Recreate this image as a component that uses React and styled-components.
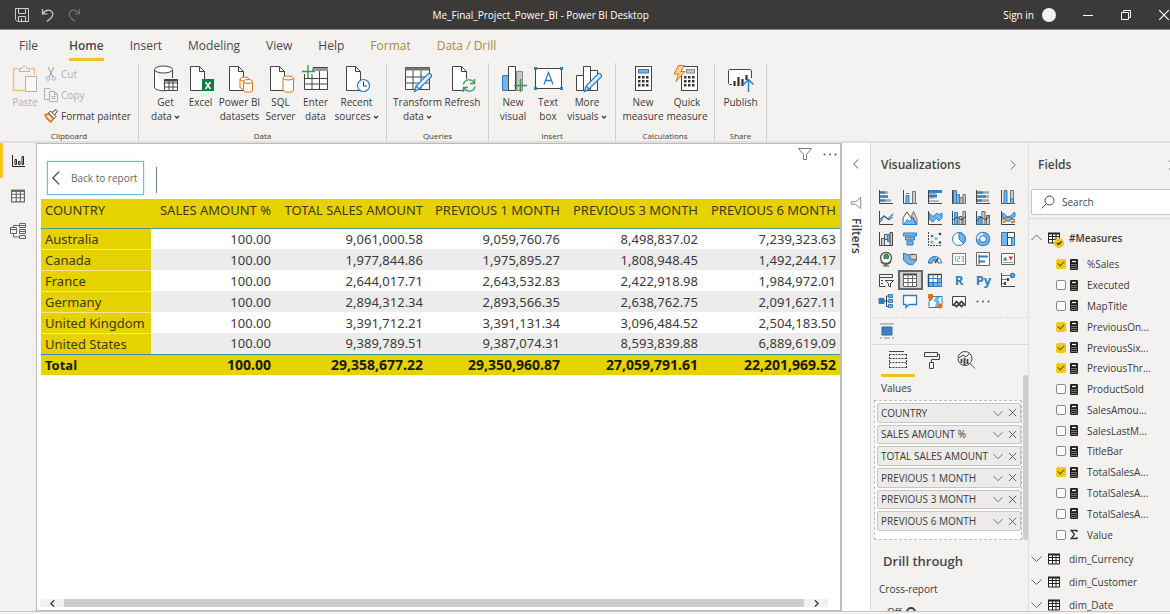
import React, { useState } from 'react';
import styled, { createGlobalStyle, css } from 'styled-components';

const GlobalStyle = createGlobalStyle`
  * {
    box-sizing: border-box;
  }

  body {
    margin: 0;
    overflow: hidden;
    background: #f3f2f1;
    color: #3b3a39;
    font-family: 'Open Sans', 'Noto Sans', sans-serif;
    font-size: 10px;
    line-height: 14px;
  }

  button,
  input {
    font: inherit;
    color: inherit;
  }

  button {
    padding: 0;
    border: 0;
    background: none;
    cursor: pointer;
  }
`;

const Shell = styled.div`
  height: 100vh;
  display: flex;
  flex-direction: column;
  overflow: hidden;
`;

const Glyph = styled.svg`
  display: block;
  flex: none;
  width: ${props => props.$w}px;
  height: ${props => props.$h || props.$w}px;
  fill: none;
  stroke: ${props => props.$color || '#444'};
  stroke-width: ${props => props.$line || 1};
`;

/* ---------- title bar ---------- */

const TitleBar = styled.header`
  flex: none;
  display: grid;
  grid-template-columns: 434fr auto 523fr;
  align-items: center;
  height: 30px;
  background: #3b3a39;
  border-bottom: 1px solid #8a8886;
  color: #fff;
  overflow: hidden;
`;

const QuickAccess = styled.div`
  display: flex;
  align-items: center;
  gap: 12px;
  padding-left: 15px;
`;

const WindowTitle = styled.h1`
  margin: 0;
  font-size: 10px;
  font-weight: 400;
  white-space: nowrap;
`;

const WindowActions = styled.div`
  display: flex;
  align-items: center;
  justify-content: flex-end;
`;

const SignIn = styled.button`
  display: flex;
  align-items: center;
  gap: 8px;
  margin-right: 26px;
`;

const Avatar = styled.span`
  width: 14px;
  height: 14px;
  border-radius: 50%;
  background: #f3f2f1;
`;

const WindowButton = styled.button`
  display: flex;
  margin-left: ${props => (props.$first ? 0 : 26)}px;
`;

/* ---------- ribbon ---------- */

const Ribbon = styled.div`
  flex: none;
  border-bottom: 2px solid #e1dfdd;
`;

const TabRow = styled.nav`
  display: flex;
  align-items: flex-start;
  gap: 26px;
  height: 33px;
  padding: 6px 0 0 19px;
`;

const RibbonTab = styled.button`
  height: 25px;
  padding: 1px 0 3px;
  border-bottom: 3px solid ${props => (props.$active ? '#e8c51e' : 'transparent')};
  margin-right: ${props => (props.$file ? 5 : 0)}px;
  color: ${props => (props.$context ? '#a98b2d' : '#4a4846')};
  font-size: 12px;
  line-height: 18px;
  font-weight: ${props => (props.$active ? 600 : 400)};
`;

const Groups = styled.div`
  display: flex;
  height: 78px;
`;

const Group = styled.section`
  display: flex;
  flex-direction: column;
  justify-content: space-between;
  align-items: center;
  width: ${props => props.$width}px;
  border-right: 1px solid #d0cecc;
  padding-top: 2px;
`;

const GroupTools = styled.div`
  display: flex;
  align-items: flex-start;
`;

const GroupLabel = styled.div`
  font-size: 8px;
  line-height: 10px;
`;

const RibbonButton = styled.button`
  display: flex;
  flex-direction: column;
  align-items: center;
  width: ${props => props.$width}px;
  color: ${props => (props.$disabled ? '#b3b0ad' : '#3b3a39')};
  white-space: nowrap;
  gap: 2px;
`;

const ButtonText = styled.span`
  display: block;
  line-height: 14px;
`;

const ClipList = styled.div`
  display: flex;
  flex-direction: column;
  width: 88px;
  gap: 7px;
  padding-top: 2px;
`;

const ClipButton = styled.button`
  display: flex;
  align-items: center;
  gap: 3px;
  height: 14px;
  white-space: nowrap;
  color: ${props => (props.$disabled ? '#b3b0ad' : '#3b3a39')};
`;

/* ---------- workspace ---------- */

const Workspace = styled.div`
  flex: 1;
  min-height: 0;
  display: flex;
`;

const StatusEdge = styled.footer`
  flex: none;
  height: 3px;
  border-top: 1px solid #c8c6c4;
`;

const ViewRail = styled.nav`
  flex: none;
  display: flex;
  flex-direction: column;
  width: 36px;
`;

const RailButton = styled.button`
  display: flex;
  align-items: center;
  justify-content: center;
  height: 35px;
  padding-right: 3px;
  border-left: 3px solid ${props => (props.$active ? '#f2c811' : 'transparent')};
`;

const Canvas = styled.main`
  flex: 1;
  min-width: 0;
  display: flex;
  flex-direction: column;
  background: #fff;
  border: 1px solid #bebbb8;
  border-right-width: 2px;
`;

const CanvasHeader = styled.div`
  display: flex;
  height: 55px;
  padding: 3px 3px 0 10px;
`;

const BackButton = styled.button`
  display: flex;
  align-items: center;
  gap: 8px;
  width: 97px;
  height: 34px;
  margin-top: 14px;
  padding-left: 1px;
  border: 1px solid #5fc3e4;
  box-shadow: 0 0 2px #9fdcf0;
  color: #666;
  white-space: nowrap;
`;

const HeaderRule = styled.div`
  width: 1px;
  height: 26px;
  margin: 20px auto 0 12px;
  background: #777;
`;

const HeaderActions = styled.div`
  display: flex;
  align-items: center;
  gap: 11px;
  height: 14px;
`;

const TableWrap = styled.div`
  flex: 1;
  padding: 0 3px 0 4px;
`;

const DataTable = styled.table`
  width: 100%;
  table-layout: fixed;
  border-collapse: collapse;
  color: #3b3a39;
  font-family: 'Noto Sans', 'Open Sans', sans-serif;
  font-size: 13px;
  line-height: 20px;
`;

const Column = styled.col`
  width: ${props => props.$width}px;
`;

const HeadCell = styled.th`
  height: 29px;
  padding: 1px 4px 0;
  vertical-align: top;
  border-bottom: 1px solid #4a9a8c;
  background: #e6d200;
  font-weight: 400;
  text-align: ${props => (props.$left ? 'left' : 'right')};
  white-space: nowrap;
  color: #3d3a14;
`;

const BodyRow = styled.tr`
  height: 21px;
  background: ${props => (props.$shade ? '#ececec' : '#fff')};
`;

const RowHead = styled.th`
  padding: 0 4px;
  background: #e6d200;
  border-bottom: ${props => (props.$last ? '0' : '1px solid #f1e88a')};
  color: #3d3a14;
  font-weight: 400;
  text-align: left;
  white-space: nowrap;
`;

const Cell = styled.td`
  padding: 0 4px;
  text-align: right;
`;

const TotalCell = styled.td`
  height: 20px;
  padding: 0 4px;
  border-top: 1px solid #3d8fa8;
  background: #e6d200;
  color: #1c1a08;
  font-size: 14px;
  font-weight: 700;
  text-align: right;

  &:first-child {
    font-size: 13px;
    text-align: left;
  }
`;

const ScrollTrack = styled.div`
  display: flex;
  align-items: center;
  height: 8px;
  margin: 0 12px 3px 3px;
  background: #f1f1f1;
`;

const ScrollArrow = styled.button`
  display: flex;
  justify-content: center;
  width: 24px;
`;

const ScrollThumb = styled.div`
  flex: 1;
  height: 8px;
  background: #cdcdcd;
`;

const FiltersPane = styled.aside`
  flex: none;
  display: flex;
  flex-direction: column;
  align-items: center;
  width: 28px;
  padding-top: 16px;
  background: #fff;
`;

const FiltersTitle = styled.h2`
  margin: 9px 0 0;
  writing-mode: vertical-rl;
  font-size: 12px;
  line-height: 16px;
  font-weight: 600;
`;

const FilterMark = styled.span`
  margin-top: 28px;
  transform: rotate(90deg);
`;

/* ---------- side panes ---------- */

const Pane = styled.aside`
  flex: none;
  width: ${props => props.$width}px;
  overflow: hidden;
  border-left: 1px solid #e1dfdd;
`;

const PaneHeader = styled.div`
  display: flex;
  align-items: center;
  justify-content: space-between;
  width: ${props => props.$width}px;
  height: 44px;
  padding: 0 0 0 ${props => props.$inset || 10}px;
`;

const PaneTitle = styled.h2`
  margin: 0;
  font-size: 12px;
  line-height: 18px;
  font-weight: 600;
  color: #484644;
`;

const VisualGrid = styled.div`
  display: grid;
  grid-template-columns: repeat(6, 1fr);
  grid-auto-rows: 1fr;
  height: 124px;
  margin: 0 8px 6px 3px;
`;

const VisualButton = styled.button`
  display: flex;
  align-items: center;
  justify-content: center;
  ${props =>
    props.$selected &&
    css`
      background: #d2d0ce;
      outline: 2px solid #666;
      outline-offset: -2px;
    `}
`;

const ScriptMark = styled.span`
  color: #2b7fc3;
  font-size: 13px;
  line-height: 16px;
  font-weight: 700;
`;

const CustomVisuals = styled.div`
  display: flex;
  align-items: center;
  height: 28px;
  padding-left: 8px;
  border-top: 1px dashed #dcdad8;
  border-bottom: 1px solid #dcdad8;
`;

const PaneBody = styled.div`
  display: flex;
`;

const PaneContent = styled.div`
  flex: 1;
  min-width: 0;
`;

const PaneScroll = styled.div`
  width: 5px;
  height: 165px;
  margin-top: 30px;
  border-radius: 2px;
  background: #d0cecc;
`;

const FormatTabs = styled.div`
  display: flex;
  height: 32px;
  padding-left: 10px;
`;

const FormatTab = styled.button`
  display: flex;
  align-items: center;
  justify-content: center;
  width: 34px;
  border-bottom: 3px solid ${props => (props.$active ? '#e8c51e' : 'transparent')};
`;

const WellLabel = styled.h3`
  margin: 0;
  padding: 4px 0 5px 10px;
  font-size: 10px;
  font-weight: 400;
  line-height: 14px;
`;

const Well = styled.ul`
  list-style: none;
  display: grid;
  grid-auto-rows: 1fr;
  gap: 2px;
  height: 140px;
  margin: 0 1px 0 3px;
  padding: 2px 2px 8px;
  background: #fff;
  border: 1px dashed #bebbb8;
`;

const WellItem = styled.li`
  display: flex;
  align-items: center;
  gap: 5px;
  padding: 0 3px;
  border: 1px solid #c8c6c4;
  border-radius: 2px;
  background: #edebe9;
  white-space: nowrap;
`;

const WellName = styled.span`
  flex: 1;
  min-width: 0;
`;

const DrillTitle = styled.h2`
  margin: 0;
  padding: 11px 0 0 12px;
  font-size: 13px;
  line-height: 20px;
  font-weight: 600;
  color: #484644;
`;

const DrillLabel = styled.label`
  display: block;
  padding: 11px 0 0 8px;
`;

const DrillToggle = styled.div`
  display: flex;
  gap: 4px;
  padding: 9px 0 0 16px;
`;

const Toggle = styled.input`
  appearance: none;
  width: 10px;
  height: 10px;
  margin: 2px 0 0;
  border: 2px solid #484644;
  border-radius: 50%;
`;

const SearchRow = styled.div`
  margin-top: 2px;
  padding: 0 0 3px 2px;
  border-bottom: 1px solid #dcdad8;
`;

const SearchField = styled.label`
  display: flex;
  align-items: center;
  gap: 5px;
  width: 148px;
  height: 26px;
  padding-left: 9px;
  border: 1px solid #c8c6c4;
  border-radius: 2px;
  background: #fff;
`;

const SearchInput = styled.input`
  flex: 1;
  min-width: 0;
  border: 0;
  outline: 0;
  background: none;

  &::placeholder {
    color: #484644;
  }
`;

const TreeRow = styled.button`
  display: flex;
  align-items: center;
  gap: 6px;
  width: 100%;
  height: 23px;
  padding-left: 2px;
  font-weight: ${props => (props.$strong ? 600 : 400)};
  white-space: nowrap;
`;

const TreeName = styled.span`
  padding-left: 3px;
`;

const TableMark = styled.span`
  position: relative;
`;

const CheckBadge = styled.span`
  position: absolute;
  left: 6px;
  top: 6px;
`;

const FieldTree = styled.div`
  padding-top: 7px;
`;

const FieldList = styled.ul`
  list-style: none;
  display: grid;
  grid-auto-rows: 1fr;
  height: 291px;
  margin: 5px 0 2px;
  padding: 0 0 0 27px;
`;

const FieldRow = styled.label`
  display: flex;
  align-items: center;
  gap: 4px;
  height: 100%;
  white-space: nowrap;
`;

const FieldName = styled.span`
  padding-left: 5px;
`;

const Check = styled.input`
  appearance: none;
  display: flex;
  justify-content: center;
  width: 10px;
  height: 10px;
  margin: 0;
  border: 1px solid #8a8886;
  border-radius: 2px;
  background: #fff;

  &:checked {
    border-color: #f0c818;
    background: #f0c818;
  }

  &:checked::after {
    content: '';
    width: 3px;
    height: 5px;
    border: solid #6b5600;
    border-width: 0 1px 1px 0;
    transform: rotate(45deg);
  }
`;

/* ---------- icons ---------- */

const BLUE = '#2b7fc3';
const SKY = '#74b4e8';
const GREY = '#a6a4a2';
const ORANGE = '#d9731a';

const Chevron = ({ dir = 'down', w = 10, color = '#666', line }) => {
  const paths = {
    down: 'M0 3l5 5 5-5',
    up: 'M0 7.500l5-5 5 5',
    left: 'M7.500 0l-5 5 5 5',
    right: 'M2.500 0l5 5-5 5',
  };
  return (
    <Glyph $w={w} viewBox="-.5 -.5 11 11" $color={color} $line={line}>
      <path d={paths[dir]} />
    </Glyph>
  );
};

const Cross = ({ w = 9, color = '#555' }) => (
  <Glyph $w={w} viewBox="0 0 10 10" $color={color}>
    <path d="M1 1l8 8M9 1l-8 8" />
  </Glyph>
);

const Caret = () => (
  <svg width="8" height="5" viewBox="0 0 8 5" fill="none" stroke="#3b3a39" strokeWidth="1.300">
    <path d="M3 1l2 2 2-2" />
  </svg>
);

const Page = () => <path d="M4.500 1.500h9l5 5v19h-14zM13.500 1.500v5h5" fill="#fff" />;

const Barrel = ({ x, y, w, h }) => (
  <g fill="#fff">
    <path d={`M${x} ${y + 2}v${h - 4}c0 3 ${w} 3 ${w} 0v-${h - 4}`} />
    <ellipse cx={x + w / 2} cy={y + 2} rx={w / 2} ry="2" />
  </g>
);

const Pencil = () => (
  <path
    d="M11.500 26.500l1.500-5.500 12-12c2-1.500 4.500 1 3 3l-12 12zM13 21l3.500 3.500"
    fill="#dcecf9"
    stroke={BLUE}
    strokeWidth="1.200"
  />
);

const Calculator = ({ x = 0 }) => (
  <g>
    <rect x={6.5 + x} y="1.500" width="16" height="24" fill="#fff" />
    {[0, 1, 2].map(r =>
      [0, 1, 2].map(c => (
        <rect key={`${r}${c}`} x={9 + x + c * 4} y={11 + r * 4} width="2.500" height="2.500" fill="#333" stroke="none" />
      ))
    )}
  </g>
);

const ribbonArt = {
  paste: (
    <g>
      <path d="M7 3.500H2.500v22H14M20 3.500h3.500V10" stroke="#f0c08a" strokeWidth="1.500" />
      <path d="M8.500 6.500v-3h2.500c0-3 5-3 5 0h2.500v3z" stroke="#b3b0ad" />
      <path d="M14.500 11.500h11v15h-11z" fill="#f8f8f8" stroke="#b3b0ad" />
    </g>
  ),
  getData: (
    <g>
      <path d="M3.500 5v17c0 4 10 4 12 3.500M21.500 5v8" fill="#fff" />
      <ellipse cx="12.500" cy="4.500" rx="9" ry="3.500" fill="#fff" />
      <path d="M13.500 14.500h13v11h-13zM13.500 18h13M13.500 22h13M18 15v11M22 15v11" fill="#fff" />
      <path d="M13.500 15.500h13" strokeWidth="2" />
    </g>
  ),
  excel: (
    <g>
      <Page />
      <rect x="16" y="14" width="12" height="12" fill="#107c41" stroke="none" />
      <path d="M19.500 17l5 7M24.500 17l-5 7" stroke="#fff" strokeWidth="1.600" />
    </g>
  ),
  datasets: (
    <g>
      <Page />
      <g stroke={ORANGE}>
        <Barrel x={15} y={12} w={9} h={12} />
        <Barrel x={18.5} y={14.500} w={9} h={12.500} />
      </g>
    </g>
  ),
  sql: (
    <g>
      <Page />
      <g stroke={ORANGE}>
        <Barrel x={17} y={11} w={10.5} h={16} />
      </g>
    </g>
  ),
  enterData: (
    <g>
      <path d="M3.500 9v15.500h23v-22H12M3.500 13.500h23M3.500 19h23M11 9v15.500M18.500 6v18.500" fill="#fff" />
      <path d="M11 4.500h16" strokeWidth="3" stroke="#999" />
      <path d="M7 0v13M1 6.500h13" stroke="#2f9e52" strokeWidth="1.400" />
    </g>
  ),
  recent: (
    <g>
      <Page />
      <circle cx="21.500" cy="20.500" r="6" fill="#fff" stroke={BLUE} strokeWidth="1.200" />
      <path d="M21.500 16.500v4.500h3.500" stroke="#333" />
    </g>
  ),
  transform: (
    <g>
      <path d="M2.500 2.500h24v22h-24zM2.500 12h24M2.500 18h24M10 5v20M18 5v20" fill="#fff" />
      <path d="M2.500 4h24" strokeWidth="3" stroke="#777" />
      <Pencil />
    </g>
  ),
  refresh: (
    <g>
      <Page />
      <circle cx="21" cy="20.500" r="7" fill="#f3f2f1" stroke="none" />
      <path
        d="M15.500 19.500c1-6 9-6 11-1M26.500 14v4.500h-4.500M27 21.500c-1 6-9 6-11 1M15.500 27v-4.500h4.500"
        stroke="#3b9a5a"
        strokeWidth="1.400"
      />
    </g>
  ),
  newVisual: (
    <g>
      <path d="M3.500 10.500h6v15h-6z" fill={SKY} stroke={BLUE} />
      <path d="M17.500 6.500h6v19h-6z" fill="#c8c6c4" stroke="#8a8886" />
      <path d="M9.500 1.500h7v24h-7z" fill="#fff" />
      <path d="M21.500 14v13M15 20.500h13" stroke="#2f9e52" strokeWidth="1.400" />
    </g>
  ),
  textBox: (
    <g>
      <path d="M1.500 3.500h26v20h-26z" fill="#fff" />
      <g fill={BLUE} stroke="none">
        <path d="M0 2h3v3H0zM26 2h3v3h-3zM0 22h3v3H0zM26 22h3v3h-3z" />
      </g>
      <path d="M10 19.500l4.500-12 4.500 12M11.500 15.500h6" stroke={BLUE} strokeWidth="1.300" />
    </g>
  ),
  moreVisuals: (
    <g>
      <path d="M3.500 10.500h7v15h-7zM17.500 5.500h7v20h-7zM10.500 1.500h7v24h-7z" fill="#fff" />
      <Pencil />
    </g>
  ),
  measure: (
    <g>
      <Calculator />
      <rect x="9.500" y="4.500" width="10" height="3.500" fill={SKY} stroke={BLUE} />
    </g>
  ),
  quickMeasure: (
    <g>
      <Calculator x={2} />
      <rect x="13.500" y="4.500" width="8" height="3.500" fill="#c8c6c4" stroke="#888" />
      <path d="M5.500.500h6l-3.500 6h4l-9 10 2.500-7.500H1z" fill="#fbd08a" stroke={ORANGE} />
    </g>
  ),
  publish: (
    <g>
      <path d="M6 19.500H3.500c-1 0-1-1-1-1V5.500c0-1 1-1 1-1h20c2 0 2 1 2 1V13" fill="#fff" />
      <path d="M8.500 16v5M12.500 12v9M16.500 14v7M20.500 10v5" stroke="#333" strokeWidth="2.200" />
      <path d="M22.500 27V14.500M17.500 19.500l5-5 5 5" stroke={BLUE} strokeWidth="1.500" />
    </g>
  ),
};

const RibbonIcon = ({ name }) => (
  <Glyph $w={29} $h={28} viewBox="0 0 29 28" aria-hidden="true">
    {ribbonArt[name]}
  </Glyph>
);

const CutIcon = () => (
  <Glyph $w={14} viewBox="0 0 14 14" $color="#9a9896">
    <path d="M4 0l5 10M10 0L5 10" />
    <circle cx="4" cy="11.500" r="1.800" stroke="#8dbbe0" />
    <circle cx="10" cy="11.500" r="1.800" stroke="#8dbbe0" />
  </Glyph>
);

const CopyIcon = () => (
  <Glyph $w={14} viewBox="0 0 14 14" $color="#b3b0ad">
    <path d="M5 11.500H.5V.5h5l1.500 2M5.500 3.500h5l3 3v7h-8zM10.500 3.500v3h3M7.500 8.500h4M7.500 10.500h4" />
  </Glyph>
);

const BrushIcon = () => (
  <Glyph $w={14} viewBox="0 0 14 14">
    <path d="M1 6l3.500-1.500 5 5L7 13C4 11 2 9 1 6z" fill="#fbd9b0" stroke={ORANGE} strokeWidth="1.400" />
    <path d="M4.500 4l2-2 5.500 5.500-2 2zM8 3.500L12 .5l1.500 1.500-3 4" fill="#fff" />
  </Glyph>
);

const SaveIcon = () => (
  <Glyph $w={14} viewBox="0 0 14 14" $color="#d0cecc">
    <path d="M.5.5h13v13H2.500l-2-2zM3.500.5v5h7v-5M3.500 13.500v-5h7v5M6.500 10.500v3" />
  </Glyph>
);

const UndoIcon = ({ color, flip }) => (
  <Glyph $w={14} viewBox="0 0 14 14" $color={color} $line={1.2}>
    <path
      d="M1.500 1v5h5M1.500 6c3-4 6-4.500 8.500-3 2.500 2 2.500 4.500 0 7l-4 3.500"
      transform={flip ? 'translate(14) scale(-1 1)' : undefined}
    />
  </Glyph>
);

const FunnelIcon = ({ w = 14 }) => (
  <Glyph $w={w} viewBox="0 0 14 14" $color="#777">
    <path d="M.5 1.500h13L8.500 7.500v5l-3 0v-5z" />
  </Glyph>
);

const DotsIcon = () => (
  <Glyph $w={14} viewBox="0 0 14 14">
    <g fill="#555" stroke="none">
      <circle cx="1.500" cy="7.500" r="1" />
      <circle cx="7" cy="7.500" r="1" />
      <circle cx="12.500" cy="7.500" r="1" />
    </g>
  </Glyph>
);

const GridIcon = ({ w = 12, color = '#222' }) => (
  <Glyph $w={w} viewBox="0 0 12 12" $color={color}>
    <path d="M.5 1.500h11v9.500H.5zM.5 4.500h11M.5 7.500h11M4.500 2v9M8 2v9" fill="#fff" />
    <path d="M0 1.500h12" strokeWidth="2" />
  </Glyph>
);

const CalcIcon = () => (
  <Glyph $w={8} $h={11} viewBox="0 0 8 11">
    <rect width="8" height="11" rx="1" fill="#222" stroke="none" />
    <path d="M2 2.500h4" stroke="#fff" strokeWidth="1.200" />
    <path d="M1.500 5.500h5M1.500 7.500h5M1.500 9.500h5" stroke="#ccc" strokeDasharray="1 1" />
  </Glyph>
);

const SigmaIcon = () => (
  <Glyph $w={8} $h={11} viewBox="0 0 8 11" $color="#333" $line={1.3}>
    <path d="M7 3V1.500H1.200L4.500 5.500 1.200 9.500H7V8" />
  </Glyph>
);

const axis = <path d="M1.500 1v13.500H15" />;

const visualArt = {
  stackedBar: (
    <g>
      {axis}
      <path d="M2 3.500h5M2 7.500h8M2 11.500h5" stroke={BLUE} strokeWidth="2.500" />
      <path d="M7 3.500h3M7 11.500h6" stroke={GREY} strokeWidth="2.500" />
    </g>
  ),
  stackedColumn: (
    <g>
      {axis}
      <path d="M4 6.500h3v8H4z" fill={SKY} stroke={BLUE} />
      <path d="M10.500 2.500h3v12h-3zM4 4.500h3" fill="#d0cecc" stroke="#777" />
    </g>
  ),
  clusteredBar: (
    <g>
      {axis}
      <path d="M2 2.500h13M2 7h8" stroke={BLUE} strokeWidth="3" />
      <path d="M2 4.500h7M2 9h5M2 12h10" stroke={GREY} strokeWidth="1.500" />
    </g>
  ),
  clusteredColumn: (
    <g>
      {axis}
      <path d="M2.500 1.500h3v13h-3zM5.500 5.500h3v9h-3z" fill={SKY} stroke={BLUE} />
      <path d="M9 8.500h3v6H9zM12 5.500h2.500v9H12z" fill="#d0cecc" stroke="#777" />
    </g>
  ),
  fullBar: (
    <g>
      {axis}
      <path d="M2 3.500h6M2 7.500h9M2 11.500h5" stroke={BLUE} strokeWidth="2.500" />
      <path d="M8 3.500h6M11 7.500h3M7 11.500h7" stroke={GREY} strokeWidth="2.500" />
    </g>
  ),
  fullColumn: (
    <g>
      {axis}
      <path d="M4 1.500h3v13H4z" fill={SKY} stroke={BLUE} />
      <path d="M10.500 1.500h3v13h-3z" fill="#d0cecc" stroke="#777" />
      <path d="M10.500 10h3v4.500h-3z" fill={SKY} stroke={BLUE} />
    </g>
  ),
  line: (
    <g>
      {axis}
      <path d="M2 12l4-6 4 3 5-5" stroke={BLUE} strokeWidth="1.300" />
      <path d="M2 9l4-3 5 4 4-3" stroke="#555" />
    </g>
  ),
  area: (
    <g>
      <path d="M6 14l5.500-12.500L15 9v5.500z" fill="#d0cecc" stroke="#777" />
      <path d="M1 14.500V8l4-6 4 6 2-1 3.500 7.500z" fill="#fff" stroke="#555" />
      <path d="M1.500 14.500l4-5 2 2 3-4 4 7z" fill={SKY} stroke={BLUE} />
    </g>
  ),
  stackedArea: (
    <g>
      <path d="M2 3l4 3.500 4-3.500 2 2 3-2v5l-3 3-3-3-3 4-4-3z" fill={SKY} stroke={BLUE} />
      {axis}
    </g>
  ),
  lineStacked: (
    <g>
      {axis}
      <path d="M3.500 2.500h3v12h-3z" fill={SKY} stroke={BLUE} />
      <path d="M8 6.500h3v8H8zM12 1.500h2.500v13H12z" fill="#d0cecc" stroke="#666" />
      <path d="M2 10l4-3 5 3 4-4" />
    </g>
  ),
  lineClustered: (
    <g>
      {axis}
      <path d="M3 6.500h3v8H3z" fill={SKY} stroke={BLUE} />
      <path d="M7 1.500h3v13H7zM11.500 5.500h3v9h-3z" fill="#d0cecc" stroke="#666" />
      <path d="M2 11l4-4 5 3 4-5" />
    </g>
  ),
  ribbon: (
    <g>
      <path d="M2 3c3 0 4 4 6.500 4S12 2.500 15 2.500v4c-2 0-4 5-6.500 5S5 7 2 7z" fill={SKY} stroke={BLUE} />
      <path d="M2 9.500c3 0 4-3 6.500-3s4 3.500 6.500 3.500" stroke="#777" strokeWidth="1.500" />
      <path d="M3 12.500l3-2M11 12.500l4-1" stroke={ORANGE} strokeWidth="2" />
      {axis}
    </g>
  ),
  waterfall: (
    <g>
      {axis}
      <path d="M3.500 7.500h3v7h-3zM6.500 3.500h3v5h-3z" fill="#d0cecc" stroke="#555" />
      <path d="M9.500 3.500H12v7H9.500z" fill={SKY} stroke={BLUE} />
      <path d="M12 1.500h2.500v13H12z" fill="#d0cecc" />
    </g>
  ),
  funnel: (
    <path d="M1.500 2h13v3h-13zM3.500 6h9v3h-9zM5 10h6v4H5z" fill={SKY} stroke={BLUE} />
  ),
  scatter: (
    <g>
      <path d="M1.500 1v13.500H15" strokeDasharray="2 1" />
      <g stroke="none" fill="#444">
        <circle cx="13" cy="3" r="1.300" />
        <circle cx="5" cy="5" r="1.300" fill={BLUE} />
        <circle cx="9" cy="7.500" r="1.600" fill={SKY} />
        <circle cx="5" cy="11" r="1.600" fill={SKY} />
        <circle cx="13" cy="11.500" r="1.300" />
      </g>
    </g>
  ),
  pie: (
    <g>
      <circle cx="8" cy="8" r="6.500" fill="#fff" stroke={BLUE} />
      <path d="M8 8V1.500a6.500 6.500 0 014.500 11.100z" fill={SKY} stroke={BLUE} />
    </g>
  ),
  donut: (
    <g>
      <circle cx="8" cy="8" r="5" stroke={BLUE} strokeWidth="4.500" />
      <circle cx="8" cy="8" r="5" stroke={SKY} strokeWidth="2.500" />
      <path d="M8 3a5 5 0 00-5 5" stroke="#e8e6e4" strokeWidth="2.500" />
    </g>
  ),
  treemap: (
    <g>
      <path d="M1.500 1.500h6v13h-6z" fill={SKY} stroke={BLUE} />
      <path d="M7.500 1.500h7v5h-7zM7.500 6.500h4v8h-4z" fill="#fff" />
      <path d="M11.500 6.500h3v8h-3z" fill={SKY} stroke={BLUE} />
    </g>
  ),
  map: (
    <g>
      <circle cx="8" cy="7" r="5.500" fill="#fff" stroke="#555" strokeWidth="1.400" />
      <path d="M6 4l3-1 2 2-1 3-2-1-2 1z" fill="#3b9a5a" stroke="#2e7d46" />
      <path d="M3 11c1 3 8 3 10 0M8 13v2M5 15h6" />
    </g>
  ),
  filledMap: (
    <g>
      <path d="M1.500 2l5 2 4-1 4 1v5l-4 5-5-1-4-4z" fill={SKY} stroke={BLUE} />
      <path d="M8 3.500h6.500V9L8 8z" fill="#d0cecc" stroke="#666" />
    </g>
  ),
  gauge: (
    <g>
      <path d="M1.500 12a6.500 6.500 0 0113 0h-3.500a3 3 0 00-6 0z" fill="#d6e9f8" stroke={BLUE} />
      <path d="M1.500 12a6.500 6.500 0 016.500-6.500v3.500a3 3 0 00-3 3z" fill={SKY} stroke={BLUE} />
      <path d="M8 12l3-5" strokeWidth="1.500" />
    </g>
  ),
  card: (
    <g>
      <path d="M1.500 2.500h13v11h-13z" fill="#fff" stroke="#777" />
      <path d="M4.500 5v5.500M6.500 5.500h2v2.500h-2v2.500h2M10.500 5.500h2v5h-2M10.500 8h2" stroke={SKY} />
    </g>
  ),
  multiCard: (
    <g>
      <path d="M1.500 1.500h13v13h-13z" fill="#fff" stroke="#666" />
      <path d="M4 5.500h9M4 10.500h6" stroke={BLUE} strokeWidth="2" />
      <path d="M4 3.500v10" />
    </g>
  ),
  kpi: (
    <g>
      <path d="M1.500 2.500h13v11h-13z" fill="#fff" stroke="#666" />
      <path d="M3 9.500l2.200-4 2.200 4z" fill="#3b9a5a" stroke="none" />
      <path d="M8.500 5.500h4.500l-2.200 4z" fill="#d13438" stroke="none" />
      <path d="M3 11.500h10" stroke="#999" />
    </g>
  ),
  slicer: (
    <g>
      <path d="M1.500 2.500h13v3h-13zM1.500 5.500v9h6M3 8.500h2M3 11.500h2M7 8.500h2" />
      <path d="M7.500 8.500h8l-3 3v3.500l-2-1v-2.500z" fill="#fff" />
    </g>
  ),
  table: (
    <g>
      <path d="M1.500 2.500h13v12h-13zM1.500 6.500h13M1.500 10.500h13M6 4v10.500M10.500 4v10.500" fill="#fff" stroke="#666" />
      <path d="M1 2.500h14" strokeWidth="2" />
    </g>
  ),
  matrix: (
    <g>
      <path d="M1.500 2.500h13v12h-13z" fill="#fff" />
      <path d="M6 10.500h8.500v4H6zM10.500 6.500h4v4h-4zM1.500 10.500H6v4H1.500z" fill={SKY} stroke={BLUE} />
      <path d="M1.500 6.500h13M6 3v11.500M10.500 3v11.500" stroke={BLUE} />
      <path d="M1 2.500h14M1.500 2v13" strokeWidth="1.500" />
    </g>
  ),
  influencers: (
    <g>
      {axis}
      <path d="M2 3.500h9M2 7.500h6M2 11.500h3" stroke="#777" />
      <circle cx="12.500" cy="3.500" r="2" fill={SKY} stroke={BLUE} strokeWidth="1.400" />
      <path d="M8 6v3M5 10v3" strokeWidth="2" />
    </g>
  ),
  decomposition: (
    <g>
      <path d="M6 8h5M8.500 3v10.500M8.500 3H11M8.500 13.500H11" />
      <path d="M1 5.500h5v5H1z" fill={BLUE} stroke={BLUE} />
      <path d="M10.500 1.500h4v3h-4zM10.500 6.500h4v3h-4zM10.500 11.500h4v3h-4z" fill={SKY} stroke={BLUE} />
    </g>
  ),
  qna: <path d="M1.500 2.500h13v9H7l-3 3v-3H1.500z" fill="#fff" stroke={BLUE} strokeWidth="1.300" />,
  arcgis: (
    <g>
      <path d="M4 3.500h11v8l-4 3H2V9z" fill="#fff" stroke={BLUE} />
      <path d="M9 4l-3 4 3 1-1 5h3l2-5-2-2 2-3z" fill={SKY} stroke="none" />
      <path d="M3.500 8L1.500 5V1.500h4V5z" fill={ORANGE} stroke={ORANGE} />
      <circle cx="13" cy="13" r="2.500" fill={ORANGE} stroke="none" />
    </g>
  ),
  powerApps: (
    <g>
      <path d="M3 12.500H1.500v-9h13v9H13" fill="#fff" />
      <path d="M3 11.500l2.500-3 5 5 2.500-2.500-2.500-2.500-5 5z" strokeWidth="1.800" />
    </g>
  ),
};

const visuals = [
  ['Stacked bar chart', 'stackedBar'],
  ['Stacked column chart', 'stackedColumn'],
  ['Clustered bar chart', 'clusteredBar'],
  ['Clustered column chart', 'clusteredColumn'],
  ['100% stacked bar chart', 'fullBar'],
  ['100% stacked column chart', 'fullColumn'],
  ['Line chart', 'line'],
  ['Area chart', 'area'],
  ['Stacked area chart', 'stackedArea'],
  ['Line and stacked column chart', 'lineStacked'],
  ['Line and clustered column chart', 'lineClustered'],
  ['Ribbon chart', 'ribbon'],
  ['Waterfall chart', 'waterfall'],
  ['Funnel', 'funnel'],
  ['Scatter chart', 'scatter'],
  ['Pie chart', 'pie'],
  ['Donut chart', 'donut'],
  ['Treemap', 'treemap'],
  ['Map', 'map'],
  ['Filled map', 'filledMap'],
  ['Gauge', 'gauge'],
  ['Card', 'card'],
  ['Multi-row card', 'multiCard'],
  ['KPI', 'kpi'],
  ['Slicer', 'slicer'],
  ['Table', 'table'],
  ['Matrix', 'matrix'],
  ['R script visual', 'R'],
  ['Python visual', 'Py'],
  ['Key influencers', 'influencers'],
  ['Decomposition tree', 'decomposition'],
  ['Q&A', 'qna'],
  ['ArcGIS Maps', 'arcgis'],
  ['Power Apps', 'powerApps'],
  ['Get more visuals', 'more'],
];

/* ---------- data ---------- */

const tabs = ['File', 'Home', 'Insert', 'Modeling', 'View', 'Help', 'Format', 'Data / Drill'];

const groups = [
  {
    label: 'Data',
    width: 248,
    tools: [
      { icon: 'getData', lines: ['Get', 'data'], caret: true, width: 40 },
      { icon: 'excel', lines: ['Excel'], width: 30 },
      { icon: 'datasets', lines: ['Power BI', 'datasets'], width: 48 },
      { icon: 'sql', lines: ['SQL', 'Server'], width: 34 },
      { icon: 'enterData', lines: ['Enter', 'data'], width: 36 },
      { icon: 'recent', lines: ['Recent', 'sources'], caret: true, width: 46 },
    ],
  },
  {
    label: 'Queries',
    width: 102,
    tools: [
      { icon: 'transform', lines: ['Transform', 'data'], caret: true, width: 50 },
      { icon: 'refresh', lines: ['Refresh'], width: 40 },
    ],
  },
  {
    label: 'Insert',
    width: 127,
    tools: [
      { icon: 'newVisual', lines: ['New', 'visual'], width: 36 },
      { icon: 'textBox', lines: ['Text', 'box'], width: 34 },
      { icon: 'moreVisuals', lines: ['More', 'visuals'], caret: true, width: 44 },
    ],
  },
  {
    label: 'Calculations',
    width: 99,
    tools: [
      { icon: 'measure', lines: ['New', 'measure'], width: 44 },
      { icon: 'quickMeasure', lines: ['Quick', 'measure'], width: 44 },
    ],
  },
  { label: 'Share', width: 52, tools: [{ icon: 'publish', lines: ['Publish'], width: 42 }] },
];

const columns = [
  { name: 'COUNTRY', width: 110 },
  { name: 'SALES AMOUNT %', width: 124 },
  { name: 'TOTAL SALES AMOUNT', width: 152 },
  { name: 'PREVIOUS 1 MONTH', width: 137 },
  { name: 'PREVIOUS 3 MONTH', width: 138 },
  { name: 'PREVIOUS 6 MONTH', width: 138 },
];

const rows = [
  ['Australia', '100.00', '9,061,000.58', '9,059,760.76', '8,498,837.02', '7,239,323.63'],
  ['Canada', '100.00', '1,977,844.86', '1,975,895.27', '1,808,948.45', '1,492,244.17'],
  ['France', '100.00', '2,644,017.71', '2,643,532.83', '2,422,918.98', '1,984,972.01'],
  ['Germany', '100.00', '2,894,312.34', '2,893,566.35', '2,638,762.75', '2,091,627.11'],
  ['United Kingdom', '100.00', '3,391,712.21', '3,391,131.34', '3,096,484.52', '2,504,183.50'],
  ['United States', '100.00', '9,389,789.51', '9,387,074.31', '8,593,839.88', '6,889,619.09'],
];

const totals = ['Total', '100.00', '29,358,677.22', '29,350,960.87', '27,059,791.61', '22,201,969.52'];

const initialFields = [
  { name: '%Sales', checked: true },
  { name: 'Executed' },
  { name: 'MapTitle' },
  { name: 'PreviousOn...', checked: true },
  { name: 'PreviousSix...', checked: true },
  { name: 'PreviousThr...', checked: true },
  { name: 'ProductSold' },
  { name: 'SalesAmou...' },
  { name: 'SalesLastM...' },
  { name: 'TitleBar' },
  { name: 'TotalSalesA...', checked: true },
  { name: 'TotalSalesA...' },
  { name: 'TotalSalesA...' },
  { name: 'Value', sum: true },
];

/* ---------- parts ---------- */

function RibbonBar() {
  const [active, setActive] = useState('Home');

  return (
    <Ribbon>
      <TabRow>
        {tabs.map((tab, i) => (
          <RibbonTab
            key={tab}
            $file={i === 0}
            $active={tab === active}
            $context={i > 5}
            onClick={() => setActive(tab)}
          >
            {tab}
          </RibbonTab>
        ))}
      </TabRow>
      <Groups>
        <Group $width={139}>
          <GroupTools>
            <RibbonButton $width={38} $disabled>
              <RibbonIcon name="paste" />
              <ButtonText>Paste</ButtonText>
            </RibbonButton>
            <ClipList>
              <ClipButton $disabled><CutIcon />Cut</ClipButton>
              <ClipButton $disabled><CopyIcon />Copy</ClipButton>
              <ClipButton><BrushIcon />Format painter</ClipButton>
            </ClipList>
          </GroupTools>
          <GroupLabel>Clipboard</GroupLabel>
        </Group>
        {groups.map(group => (
          <Group key={group.label} $width={group.width}>
            <GroupTools>
              {group.tools.map(tool => (
                <RibbonButton key={tool.icon} $width={tool.width}>
                  <RibbonIcon name={tool.icon} />
                  <span>
                    {tool.lines.map((line, i) => (
                      <ButtonText key={line}>
                        {line}
                        {tool.caret && i === 1 && <Caret />}
                      </ButtonText>
                    ))}
                  </span>
                </RibbonButton>
              ))}
            </GroupTools>
            <GroupLabel>{group.label}</GroupLabel>
          </Group>
        ))}
      </Groups>
    </Ribbon>
  );
}

function ReportCanvas() {
  return (
    <Canvas>
      <CanvasHeader>
        <BackButton>
          <Chevron dir="left" w={14} color="#444" />
          Back to report
        </BackButton>
        <HeaderRule />
        <HeaderActions>
          <button aria-label="Filters on this visual"><FunnelIcon /></button>
          <button aria-label="More options"><DotsIcon /></button>
        </HeaderActions>
      </CanvasHeader>
      <TableWrap>
        <DataTable>
          <colgroup>
            {columns.map(column => (
              <Column key={column.name} $width={column.width} />
            ))}
          </colgroup>
          <thead>
            <tr>
              {columns.map((column, i) => (
                <HeadCell key={column.name} $left={i === 0}>{column.name}</HeadCell>
              ))}
            </tr>
          </thead>
          <tbody>
            {rows.map(([country, ...values], i) => (
              <BodyRow key={country} $shade={i % 2 === 1}>
                <RowHead scope="row" $last={i === rows.length - 1}>{country}</RowHead>
                {values.map((value, c) => (
                  <Cell key={c}>{value}</Cell>
                ))}
              </BodyRow>
            ))}
          </tbody>
          <tfoot>
            <tr>
              {totals.map(value => (
                <TotalCell key={value}>{value}</TotalCell>
              ))}
            </tr>
          </tfoot>
        </DataTable>
      </TableWrap>
      <ScrollTrack>
        <ScrollArrow aria-label="Scroll left"><Chevron dir="left" w={7} color="#333" line={2} /></ScrollArrow>
        <ScrollThumb />
        <ScrollArrow aria-label="Scroll right"><Chevron dir="right" w={7} color="#333" line={2} /></ScrollArrow>
      </ScrollTrack>
    </Canvas>
  );
}

function VisualizationsPane() {
  const [selected, setSelected] = useState('table');

  return (
    <Pane $width={158}>
      <PaneHeader $width={147}>
        <PaneTitle>Visualizations</PaneTitle>
        <button aria-label="Collapse"><Chevron dir="right" /></button>
      </PaneHeader>
      <VisualGrid>
        {visuals.map(([title, name]) => (
          <VisualButton
            key={name}
            title={title}
            $selected={name === selected}
            onClick={() => setSelected(name)}
          >
            {name === 'R' || name === 'Py' ? (
              <ScriptMark>{name}</ScriptMark>
            ) : name === 'more' ? (
              <DotsIcon />
            ) : (
              <Glyph $w={16} viewBox="0 0 16 16">{visualArt[name]}</Glyph>
            )}
          </VisualButton>
        ))}
      </VisualGrid>
      <CustomVisuals>
        <button aria-label="Custom visual">
          <Glyph $w={16} viewBox="0 0 16 16">
            <path d="M1 1h14M1 15h2M5 15h6M13 15h2" stroke="#888" />
            <path d="M3 4h10v8H3z" fill="#3f7fc4" stroke="#2d68aa" />
          </Glyph>
        </button>
      </CustomVisuals>
      <PaneBody>
        <PaneContent>
          <FormatTabs>
            <FormatTab $active aria-label="Fields">
              <Glyph $w={20} viewBox="0 0 20 20">
                <path d="M1 1.500h15" />
                <path
                  d="M1.500 4.500h17M1.500 8.500h17M1.500 12.500h17M1.500 17.500h17M1.500 4v14M18.500 4v14"
                  strokeDasharray="2 1"
                />
              </Glyph>
            </FormatTab>
            <FormatTab aria-label="Format">
              <Glyph $w={20} viewBox="0 0 20 20">
                <path d="M2.500 2.500h13v4h-13zM15.500 4.500h2v5h-8v3M7.500 12.500h4v6h-4z" />
              </Glyph>
            </FormatTab>
            <FormatTab aria-label="Analytics">
              <Glyph $w={20} viewBox="0 0 20 20">
                <circle cx="9" cy="8.500" r="7" />
                <path d="M14 13.500l5 5M3 8l4-3 3 2 4-4" />
                <path d="M5.500 9v4M8.500 8v7M11.500 9v5" strokeWidth="1.800" />
              </Glyph>
            </FormatTab>
          </FormatTabs>
          <WellLabel>Values</WellLabel>
          <Well>
            {columns.map(column => (
              <WellItem key={column.name}>
                <WellName>{column.name}</WellName>
                <button aria-label="Field options"><Chevron /></button>
                <button aria-label="Remove field"><Cross /></button>
              </WellItem>
            ))}
          </Well>
        </PaneContent>
        <PaneScroll />
      </PaneBody>
      <DrillTitle>Drill through</DrillTitle>
      <DrillLabel htmlFor="cross-report">Cross-report</DrillLabel>
      <DrillToggle>
        <span>Off</span>
        <Toggle id="cross-report" type="checkbox" />
      </DrillToggle>
    </Pane>
  );
}

function FieldsPane() {
  const [fields, setFields] = useState(initialFields);

  const toggleField = index => {
    setFields(fields.map((field, i) => (i === index ? { ...field, checked: !field.checked } : field)));
  };

  return (
    <Pane $width={142}>
      <PaneHeader $width={147} $inset={9}>
        <PaneTitle>Fields</PaneTitle>
        <button aria-label="Collapse"><Chevron dir="right" /></button>
      </PaneHeader>
      <SearchRow>
        <SearchField>
          <Glyph $w={14} viewBox="0 0 14 14">
            <circle cx="8.500" cy="5.500" r="4.500" />
            <path d="M5 9L.5 13.500" />
          </Glyph>
          <SearchInput type="search" placeholder="Search" aria-label="Search" />
        </SearchField>
      </SearchRow>
      <FieldTree>
        <TreeRow $strong>
          <Chevron dir="up" w={11} />
          <TableMark>
            <GridIcon />
            <CheckBadge>
              <Glyph $w={10} viewBox="0 0 10 10">
                <circle cx="5" cy="5" r="5" fill="#f2c811" stroke="none" />
                <path d="M3 5l1.500 1.500L7.500 3.500" stroke="#222" strokeWidth="1.200" />
              </Glyph>
            </CheckBadge>
          </TableMark>
          <TreeName>#Measures</TreeName>
        </TreeRow>
        <FieldList>
          {fields.map((field, i) => (
            <li key={i}>
              <FieldRow>
                <Check type="checkbox" checked={!!field.checked} onChange={() => toggleField(i)} />
                {field.sum ? <SigmaIcon /> : <CalcIcon />}
                <FieldName>{field.name}</FieldName>
              </FieldRow>
            </li>
          ))}
        </FieldList>
        {['dim_Currency', 'dim_Customer', 'dim_Date'].map(name => (
          <TreeRow key={name}>
            <Chevron w={11} />
            <GridIcon />
            <TreeName>{name}</TreeName>
          </TreeRow>
        ))}
      </FieldTree>
    </Pane>
  );
}

function App() {
  return (
    <Shell>
      <GlobalStyle />
      <TitleBar>
        <QuickAccess>
          <button aria-label="Save"><SaveIcon /></button>
          <button aria-label="Undo"><UndoIcon color="#d0cecc" /></button>
          <button aria-label="Redo"><UndoIcon color="#72706e" flip /></button>
        </QuickAccess>
        <WindowTitle>Me_Final_Project_Power_BI - Power BI Desktop</WindowTitle>
        <WindowActions>
          <SignIn>Sign in<Avatar /></SignIn>
          <WindowButton $first aria-label="Minimize">
            <Glyph $w={12} viewBox="0 0 12 12" $color="#fff"><path d="M1 6.500h10" /></Glyph>
          </WindowButton>
          <WindowButton aria-label="Restore">
            <Glyph $w={12} viewBox="0 0 12 12" $color="#fff">
              <path d="M1.500 3.500h7v7h-7zM3.500 3.500v-2h7v7h-2" />
            </Glyph>
          </WindowButton>
          <WindowButton aria-label="Close"><Cross w={12} color="#fff" /></WindowButton>
        </WindowActions>
      </TitleBar>
      <RibbonBar />
      <Workspace>
        <ViewRail>
          <RailButton $active aria-label="Report">
            <Glyph $w={14} viewBox="0 0 14 14" $color="#222">
              <path d="M1.500 1v11.500H14M4 5.500h1.500v5H4zM7.500 7.500H9v3H7.500zM11 2.500h1.500v8H11z" />
            </Glyph>
          </RailButton>
          <RailButton aria-label="Data">
            <GridIcon w={14} color="#666" />
          </RailButton>
          <RailButton aria-label="Model">
            <Glyph $w={16} viewBox="0 0 16 16" $color="#666">
              <path d="M.5 4.500h6v6h-6zM9.500.5h6v4h-6zM9.500 6.500h6v4h-6zM9.500 12.500h6v3h-6zM.5 6.500h6M9.500 2.500h6M9.500 8.500h6M3.500 4.500v-2h6M3.500 10.500v3.500h6" />
            </Glyph>
          </RailButton>
        </ViewRail>
        <ReportCanvas />
        <FiltersPane>
          <button aria-label="Expand filters"><Chevron dir="left" color="#444" /></button>
          <FilterMark><FunnelIcon w={12} /></FilterMark>
          <FiltersTitle>Filters</FiltersTitle>
        </FiltersPane>
        <VisualizationsPane />
        <FieldsPane />
      </Workspace>
      <StatusEdge />
    </Shell>
  );
}

export default App;
